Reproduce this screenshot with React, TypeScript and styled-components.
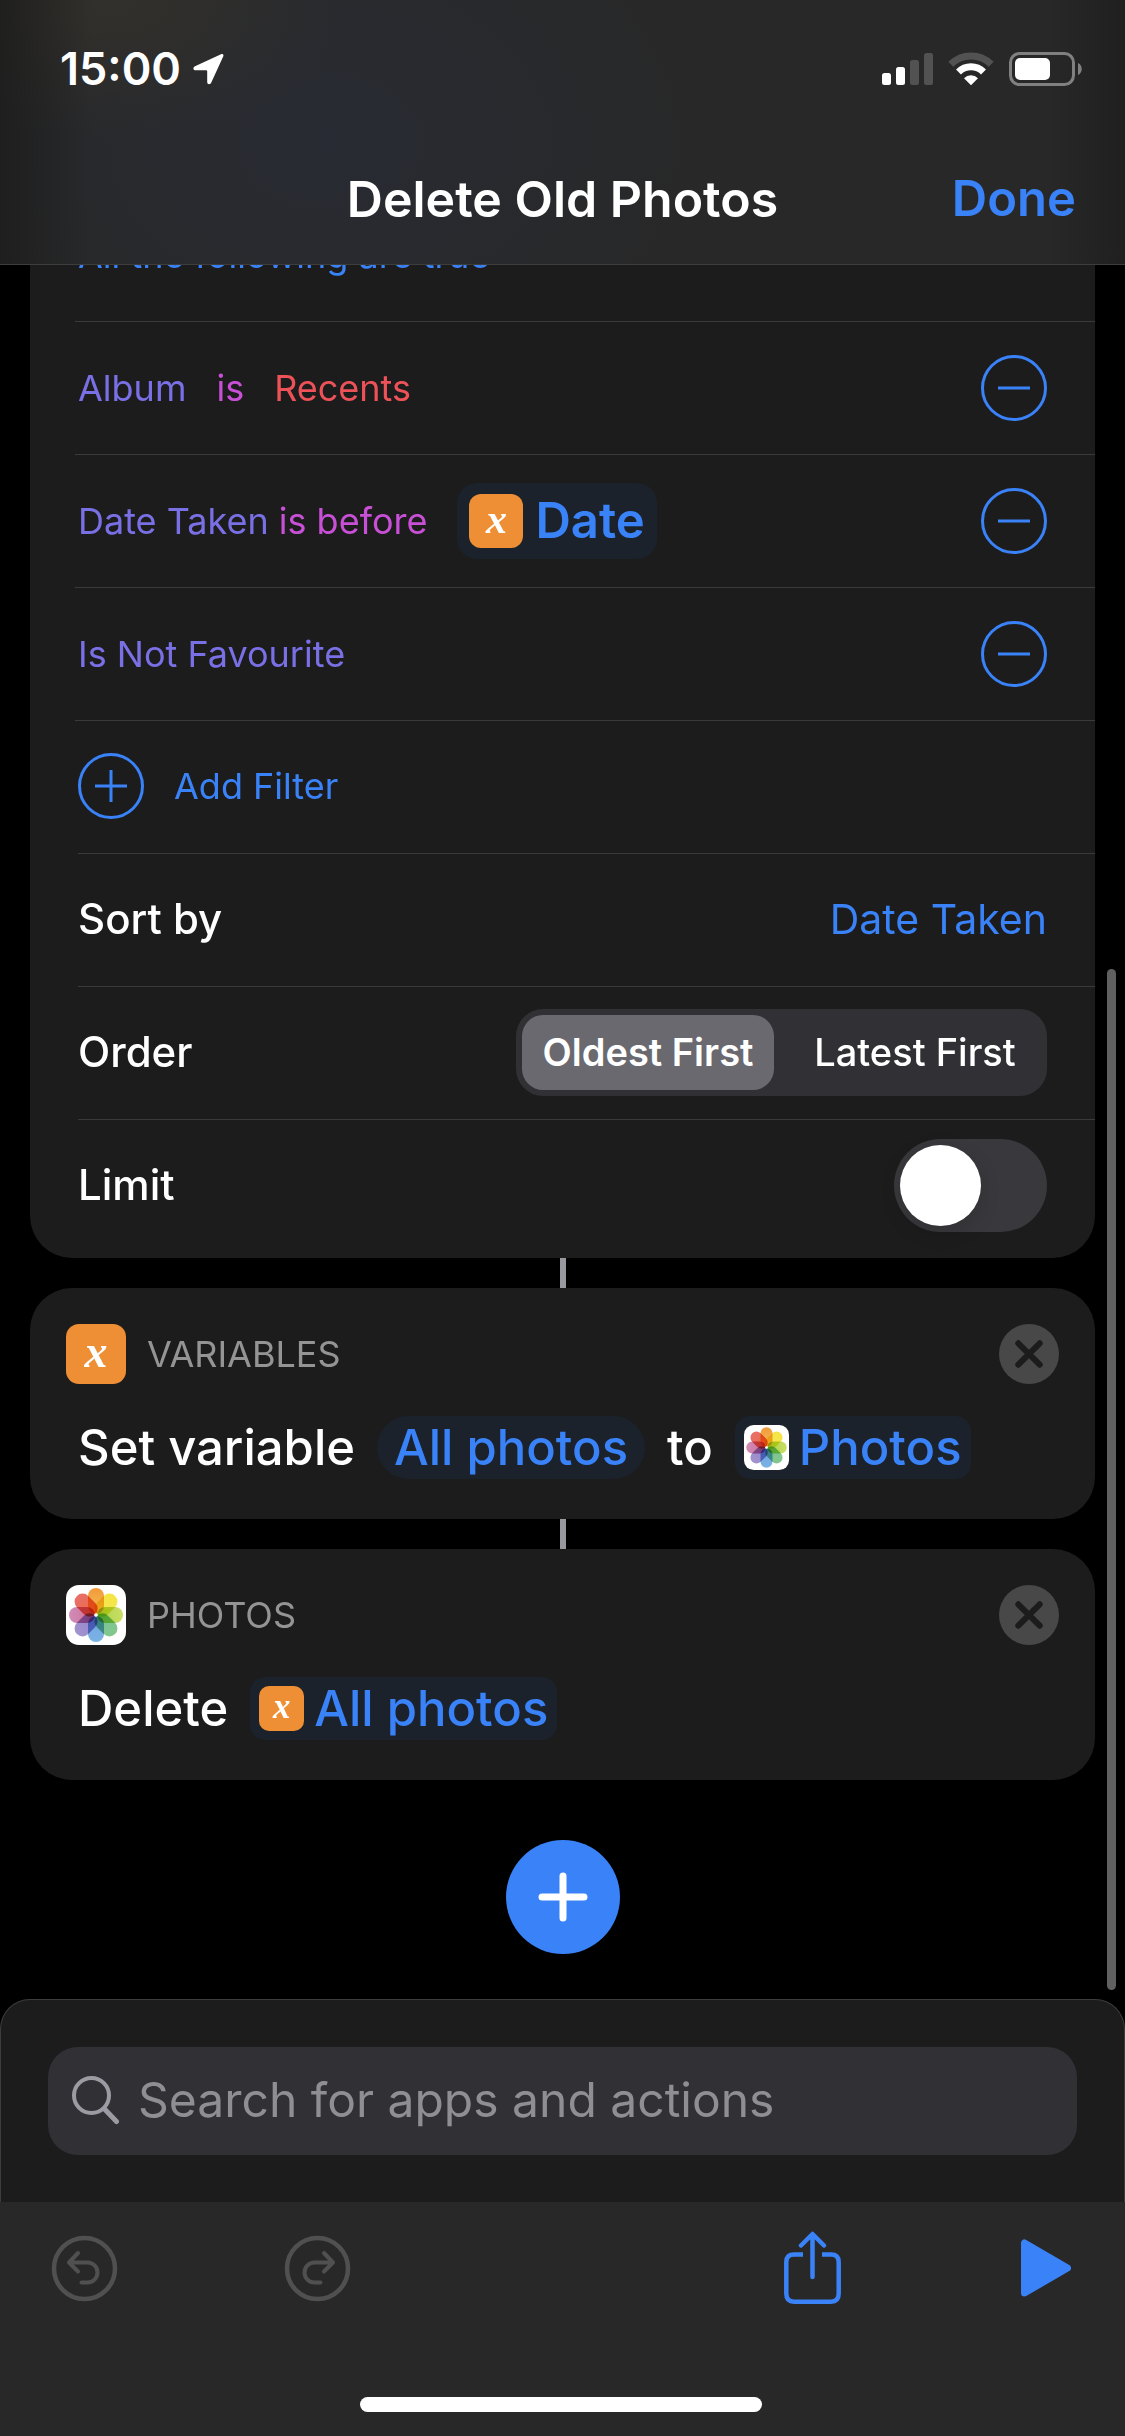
import React, { useState } from "react";
import styled, { createGlobalStyle, css } from "styled-components";

const color = {
  blue: "#3a82f7",
  violet: "#7a70e6",
  magenta: "#c850d6",
  red: "#ec5257",
  orange: "#ee8f35",
  card: "#1c1c1c",
  bar: "#282828",
  chip: "#1b222b",
  line: "#3a3a3a",
  field: "#313035",
};

const Global = createGlobalStyle`
  *, *::before, *::after { box-sizing: border-box; }
  body { margin: 0; background: #000; }
  button, input, select {
    font: inherit; color: inherit; background: none; border: 0; padding: 0; margin: 0;
    appearance: none; outline: none;
  }
`;

const Page = styled.div`
  display: flex;
  flex-direction: column;
  min-height: 100vh;
  background: #000;
  color: #fff;
  font-family: Inter, "Liberation Sans", sans-serif;
  font-size: 49px;
  line-height: 60px;
`;

/* ---------- header ---------- */

const Header = styled.header`
  position: relative;
  z-index: 1;
  border-bottom: 1px solid #3d3d3d;
  background:
    linear-gradient(90deg, rgba(28, 28, 28, 0.8), rgba(28, 28, 28, 0) 8%, rgba(28, 28, 28, 0) 93%, rgba(28, 28, 28, 0.7)),
    radial-gradient(ellipse 240px 140px at 110px 0, #32302b, rgba(50, 48, 43, 0)),
    radial-gradient(ellipse 380px 280px at 330px 140px, #282b33, rgba(40, 43, 51, 0)),
    #282828;
`;

const StatusBar = styled.div`
  display: flex;
  align-items: center;
  justify-content: space-between;
  height: 138px;
  padding: 0 43px 0 60px;
`;

const Clock = styled.div`
  display: flex;
  align-items: center;
  gap: 12px;
  font-size: 45px;
  font-weight: 600;
`;

const StatusIcons = styled.div`
  display: flex;
  align-items: center;
  gap: 15px;
`;

const NavBar = styled.div`
  display: grid;
  grid-template-columns: 1fr auto 1fr;
  align-items: center;
  height: 126px;
  padding: 0 49px 4px;
`;

const Title = styled.h1`
  grid-column: 2;
  margin: 0;
  font-size: 50px;
  font-weight: 600;
`;

const DoneButton = styled.button`
  justify-self: end;
  color: ${color.blue};
  font-weight: 600;
`;

/* ---------- editor ---------- */

const Editor = styled.main`
  position: relative;
  flex: 1;
  overflow: hidden;
  padding: 0 30px 44px;
`;

const ScrollThumb = styled.div`
  position: absolute;
  top: 704px;
  right: 9px;
  bottom: 9px;
  width: 9px;
  border-radius: 5px;
  background: #606060;
`;

const FilterCard = styled.section`
  margin-top: -76px;
  padding-bottom: 5px;
  border-radius: 0 0 42px 42px;
  background: ${color.card};
`;

const Row = styled.div<{ $last?: boolean }>`
  display: flex;
  align-items: center;
  height: 133px;
  margin-left: 45px;
  padding: 0 48px 0 3px;
  border-bottom: 1px solid ${(p) => (p.$last ? "transparent" : color.line)};
`;

const SettingRow = styled(Row)`
  margin-left: 48px;
  padding: 0 48px 2px 0;
`;

const Token = styled.button<{ $tone: string; $gap?: number }>`
  margin-right: ${(p) => p.$gap ?? 0}px;
  color: ${(p) => p.$tone};
  font-size: 36px;
`;

const Spacer = styled.div`
  flex: 1;
`;

const RingButton = styled.button`
  display: flex;
`;

const AddFilter = styled.button`
  display: flex;
  align-items: center;
  gap: 30px;
  color: ${color.blue};
  font-size: 36px;
`;

const RowLabel = styled.label`
  flex: 1;
  font-size: 42px;
  font-weight: 500;
`;

const SortSelect = styled.select`
  field-sizing: content;
  color: ${color.blue};
  font-size: 41px;
  text-align: right;
`;

const Segments = styled.div`
  display: grid;
  grid-template-columns: 252px 252px;
  gap: 15px;
  padding: 6px;
  border-radius: 27px;
  background: ${color.field};
`;

const Segment = styled.label<{ $on: boolean }>`
  position: relative;
  height: 75px;
  border-radius: 21px;
  font-size: 38px;
  font-weight: 500;
  line-height: 75px;
  text-align: center;
  white-space: nowrap;
  ${(p) =>
    p.$on &&
    css`
      background: #6a696f;
      font-weight: 600;
    `}
  input {
    position: absolute;
    inset: 0;
    opacity: 0;
  }
`;

const Switch = styled.input`
  display: flex;
  align-items: center;
  width: 153px;
  height: 93px;
  padding: 6px;
  border-radius: 47px;
  background: #39393d;
  &::before {
    content: "";
    width: 81px;
    height: 81px;
    border-radius: 50%;
    background: #fff;
    box-shadow: 0 6px 20px rgba(0, 0, 0, 0.15);
  }
  &:checked {
    justify-content: flex-end;
    background: #30d158;
  }
`;

const Connector = styled.div`
  width: 6px;
  height: 30px;
  margin: 0 auto;
  background: #98989f;
`;

const ActionCard = styled.section`
  height: 231px;
  padding: 36px;
  border-radius: 42px;
  background: ${color.card};
`;

const CardHead = styled.div`
  display: flex;
  align-items: center;
  gap: 21px;
  height: 60px;
`;

const CardName = styled.h2`
  flex: 1;
  margin: 0;
  color: #949494;
  font-size: 36px;
  font-weight: 400;
`;

const CloseButton = styled.button`
  display: flex;
`;

const Sentence = styled.div`
  display: flex;
  align-items: center;
  gap: 22px;
  margin: 32px 0 0 12px;
  font-weight: 500;
`;

const Chip = styled.button<{ $pill?: boolean; $tall?: boolean }>`
  display: flex;
  align-items: center;
  gap: ${(p) => (p.$tall ? 12 : 10)}px;
  height: ${(p) => (p.$tall ? 76 : 63)}px;
  padding: 0 ${(p) => (p.$pill ? 17 : p.$tall ? 12 : 9)}px;
  border-radius: ${(p) => (p.$pill ? 32 : p.$tall ? 20 : 15)}px;
  background: ${color.chip};
  color: ${color.blue};
  font-weight: ${(p) => (p.$tall ? 600 : 500)};
`;

const VariableTile = styled.span<{ $size: number }>`
  display: flex;
  align-items: center;
  justify-content: center;
  width: ${(p) => p.$size}px;
  height: ${(p) => p.$size}px;
  padding-bottom: ${(p) => Math.round(p.$size / 12)}px;
  border-radius: ${(p) => Math.round(p.$size / 4.5)}px;
  background: ${color.orange};
  color: #fff;
  font-family: "Liberation Serif", serif;
  font-size: ${(p) => Math.round(p.$size * 0.77)}px;
  font-style: italic;
  font-weight: 700;
  line-height: 1;
`;

const AddButton = styled.button`
  display: flex;
  align-items: center;
  justify-content: center;
  width: 114px;
  height: 114px;
  margin: 60px auto 0;
  border-radius: 50%;
  background: ${color.blue};
`;

/* ---------- bottom ---------- */

const Sheet = styled.div`
  padding: 47px 47px;
  border: 1px solid #3d3d3d;
  border-bottom: 0;
  border-radius: 30px 30px 0 0;
  background: ${color.card};
`;

const SearchBox = styled.label`
  display: flex;
  align-items: center;
  gap: 18px;
  height: 108px;
  padding: 0 24px 2px;
  border-radius: 30px;
  background: ${color.field};
`;

const SearchInput = styled.input`
  flex: 1;
  min-width: 0;
  font-size: 48px;
  &::placeholder {
    color: #8e8e93;
    opacity: 1;
  }
`;

const Toolbar = styled.footer`
  display: flex;
  flex-direction: column;
  align-items: center;
  justify-content: space-between;
  height: 234px;
  padding: 26px 54px 24px 50px;
  background: ${color.bar};
`;

const Tools = styled.div`
  display: flex;
  align-items: center;
  align-self: stretch;
  height: 80px;
`;

const ToolButton = styled.button<{ $gap?: number }>`
  display: flex;
  margin-right: ${(p) => p.$gap ?? 0}px;
`;

const HomeIndicator = styled.div`
  width: 402px;
  height: 15px;
  border-radius: 8px;
  background: #fff;
`;

/* ---------- icons ---------- */

const Ring = ({ plus }: { plus?: boolean }) => (
  <svg width="66" height="66" viewBox="0 0 66 66" fill="none" stroke={color.blue} strokeWidth="3">
    <circle cx="33" cy="33" r="31.5" />
    <path d={plus ? "M17 33H49M33 17V49" : "M17 33H49"} />
  </svg>
);

const CloseIcon = () => (
  <svg width="60" height="60" viewBox="0 0 60 60">
    <circle cx="30" cy="30" r="30" fill="#484848" />
    <path d="M19.3 19.3L40.7 40.7M40.7 19.3L19.3 40.7" stroke={color.card} strokeWidth="6" strokeLinecap="round" />
  </svg>
);

const petals = [
  ["#f09a3c", "#f7bf55"],
  ["#f5e444", "#f3ea55"],
  ["#cade62", "#a6d352"],
  ["#85c78a", "#74c4a0"],
  ["#7ab3e4", "#74a4e0"],
  ["#a294ce", "#9484cc"],
  ["#d08cb8", "#cf6f96"],
  ["#e8706c", "#ee6a40"],
];

const PhotosTile = ({ size }: { size: number }) => (
  <svg width={size} height={size} viewBox="0 0 60 60">
    <defs>
      {petals.map(([outer, inner], i) => (
        <linearGradient key={i} id={`petal-${size}-${i}`} x1="0" y1="0" x2="0" y2="1">
          <stop offset="0" stopColor={outer} />
          <stop offset="1" stopColor={inner} />
        </linearGradient>
      ))}
    </defs>
    <rect width="60" height="60" rx="13" fill="#fff" />
    <g style={{ isolation: "isolate" }}>
      {petals.map((_, i) => (
        <rect
          key={i}
          x="22"
          y="3"
          width="16"
          height="26"
          rx="8"
          fill={`url(#petal-${size}-${i})`}
          transform={`rotate(${i * 45} 30 30)`}
          style={{ mixBlendMode: "multiply" }}
        />
      ))}
    </g>
    <circle cx="30" cy="30" r="1.8" fill="#fff" />
  </svg>
);

const LocationIcon = () => (
  <svg width="31" height="32" viewBox="0 0 31 32">
    <path
      d="M28 1.2L2 13.2C-.4 14.4 0 17.3 2.6 17.3H13.3C13.9 17.3 14.2 17.6 14.2 18.2V29C14.2 31.6 17.2 32 18.3 29.6L30.2 3.5C31 1.6 29.7 .4 28 1.2Z"
      fill="#fff"
    />
  </svg>
);

const SignalIcon = () => (
  <svg width="51" height="34" viewBox="0 0 51 34" fill="#fff">
    <rect x="0" y="21" width="9" height="12" rx="2.5" />
    <rect x="14" y="15" width="9" height="18" rx="2.5" />
    <rect x="28" y="8" width="9" height="25" rx="2.5" fill="#525252" />
    <rect x="42" y="1" width="9" height="32" rx="2.5" fill="#525252" />
  </svg>
);

const WifiIcon = () => (
  <svg width="46" height="34" viewBox="0 0 46 34">
    <path d="M2.8 12.3A28.5 28.5 0 0 1 43.2 12.3" fill="none" stroke="#525252" strokeWidth="7" />
    <path d="M10.5 20A17.8 17.8 0 0 1 35.5 20" fill="none" stroke="#fff" strokeWidth="7" />
    <path d="M16 26.2A10 10 0 0 1 30 26.2L23 33.3Z" fill="#fff" />
  </svg>
);

const BatteryIcon = () => (
  <svg width="73" height="34" viewBox="0 0 73 34">
    <rect x="1.5" y="1.5" width="63" height="31" rx="9" fill="none" stroke="#808080" strokeWidth="3" />
    <rect x="6" y="6" width="35" height="22" rx="5" fill="#fff" />
    <path d="M69 11C74 13 74 21 69 23Z" fill="#808080" />
  </svg>
);

const PlusIcon = () => (
  <svg width="50" height="50" viewBox="0 0 50 50" stroke="#fff" strokeWidth="7" strokeLinecap="round">
    <path d="M4 25H46M25 4V46" />
  </svg>
);

const SearchIcon = () => (
  <svg width="48" height="50" viewBox="0 0 48 50" fill="none" stroke="#9c9ba3" strokeLinecap="round">
    <circle cx="19.5" cy="20.5" r="17.5" strokeWidth="4" />
    <path d="M32.5 34L44.5 46.5" strokeWidth="5" />
  </svg>
);

const UndoIcon = ({ flip }: { flip?: boolean }) => (
  <svg
    width="69"
    height="69"
    viewBox="0 0 69 69"
    fill="none"
    stroke="#505050"
    strokeWidth="4"
    strokeLinecap="round"
    strokeLinejoin="round"
  >
    <g transform={flip ? "translate(69 0) scale(-1 1)" : undefined}>
      <circle cx="34.5" cy="34.5" r="30.5" strokeWidth="4.5" />
      <path d="M28 19L19 28.5L28 37.5M19 28.5H37.5A9.8 9.8 0 0 1 37.5 48.5H31.5" />
    </g>
  </svg>
);

const ShareIcon = () => (
  <svg width="57" height="74" viewBox="0 0 57 74" fill="none" stroke={color.blue} strokeWidth="4.5">
    <path d="M19 23.5H10Q2.3 23.5 2.3 31V62.5Q2.3 70.7 10 70.7H47Q54.7 70.7 54.7 62.5V31Q54.7 23.5 47 23.5H38" />
    <path d="M28.5 4V46M17 14.5L28.5 3L40 14.5" strokeLinecap="round" strokeLinejoin="round" />
  </svg>
);

const PlayIcon = () => (
  <svg width="50" height="60" viewBox="0 0 50 60">
    <path
      d="M3.500 5V55L46.500 30Z"
      fill={color.blue}
      stroke={color.blue}
      strokeWidth="7"
      strokeLinejoin="round"
    />
  </svg>
);

/* ---------- screen ---------- */

export default function App() {
  const [order, setOrder] = useState("Oldest First");
  const [limit, setLimit] = useState(false);
  const [query, setQuery] = useState("");

  return (
    <Page>
      <Global />
      <Header>
        <StatusBar>
          <Clock>
            15:00
            <LocationIcon />
          </Clock>
          <StatusIcons>
            <SignalIcon />
            <WifiIcon />
            <BatteryIcon />
          </StatusIcons>
        </StatusBar>
        <NavBar>
          <Title>Delete Old Photos</Title>
          <DoneButton>Done</DoneButton>
        </NavBar>
      </Header>

      <Editor>
        <FilterCard>
          <Row>
            <Token $tone={color.blue}>All the following are true</Token>
          </Row>
          <Row>
            <Token $tone={color.violet} $gap={30}>Album</Token>
            <Token $tone={color.magenta} $gap={30}>is</Token>
            <Token $tone={color.red}>Recents</Token>
            <Spacer />
            <RingButton aria-label="Remove album filter"><Ring /></RingButton>
          </Row>
          <Row>
            <Token $tone={color.violet} $gap={10}>Date Taken</Token>
            <Token $tone={color.magenta} $gap={30}>is before</Token>
            <Chip $tall>
              <VariableTile $size={54}>x</VariableTile>
              Date
            </Chip>
            <Spacer />
            <RingButton aria-label="Remove date filter"><Ring /></RingButton>
          </Row>
          <Row>
            <Token $tone={color.violet}>Is Not Favourite</Token>
            <Spacer />
            <RingButton aria-label="Remove favourite filter"><Ring /></RingButton>
          </Row>
          <SettingRow>
            <AddFilter>
              <Ring plus />
              Add Filter
            </AddFilter>
          </SettingRow>
          <SettingRow>
            <RowLabel htmlFor="sort">Sort by</RowLabel>
            <SortSelect id="sort" defaultValue="Date Taken">
              <option>Date Taken</option>
            </SortSelect>
          </SettingRow>
          <SettingRow>
            <RowLabel as="span" id="order">Order</RowLabel>
            <Segments role="radiogroup" aria-labelledby="order">
              {["Oldest First", "Latest First"].map((name) => (
                <Segment key={name} $on={order === name}>
                  <input type="radio" name="order" checked={order === name} onChange={() => setOrder(name)} />
                  {name}
                </Segment>
              ))}
            </Segments>
          </SettingRow>
          <SettingRow $last>
            <RowLabel htmlFor="limit">Limit</RowLabel>
            <Switch id="limit" type="checkbox" checked={limit} onChange={(e) => setLimit(e.target.checked)} />
          </SettingRow>
        </FilterCard>

        <Connector />

        <ActionCard>
          <CardHead>
            <VariableTile $size={60}>x</VariableTile>
            <CardName>VARIABLES</CardName>
            <CloseButton aria-label="Remove action"><CloseIcon /></CloseButton>
          </CardHead>
          <Sentence>
            <span>Set variable</span>
            <Chip $pill>All photos</Chip>
            <span>to</span>
            <Chip>
              <PhotosTile size={45} />
              Photos
            </Chip>
          </Sentence>
        </ActionCard>

        <Connector />

        <ActionCard>
          <CardHead>
            <PhotosTile size={60} />
            <CardName>PHOTOS</CardName>
            <CloseButton aria-label="Remove action"><CloseIcon /></CloseButton>
          </CardHead>
          <Sentence>
            <span>Delete</span>
            <Chip>
              <VariableTile $size={45}>x</VariableTile>
              All photos
            </Chip>
          </Sentence>
        </ActionCard>

        <AddButton aria-label="Add action">
          <PlusIcon />
        </AddButton>
        <ScrollThumb />
      </Editor>

      <Sheet>
        <SearchBox>
          <SearchIcon />
          <SearchInput
            type="text"
            aria-label="Search for apps and actions"
            placeholder="Search for apps and actions"
            value={query}
            onChange={(e) => setQuery(e.target.value)}
          />
        </SearchBox>
      </Sheet>
      <Toolbar>
        <Tools>
          <ToolButton aria-label="Undo" $gap={164}><UndoIcon /></ToolButton>
          <ToolButton aria-label="Redo"><UndoIcon flip /></ToolButton>
          <Spacer />
          <ToolButton aria-label="Share" $gap={180}><ShareIcon /></ToolButton>
          <ToolButton aria-label="Run shortcut"><PlayIcon /></ToolButton>
        </Tools>
        <HomeIndicator />
      </Toolbar>
    </Page>
  );
}
